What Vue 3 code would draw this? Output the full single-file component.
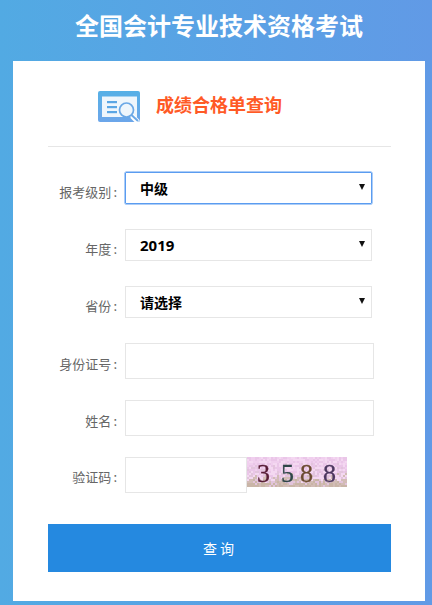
<script setup>
const rows = [
  { label: '报考级别', value: '中级', focused: true },
  { label: '年度', value: '2019', year: true },
  { label: '省份', value: '请选择' }
]
const inputs = ['身份证号', '姓名']
const digits = [
  { ch: '3', x: 10, color: '#571c36' },
  { ch: '5', x: 34, color: '#2f4649' },
  { ch: '8', x: 53, color: '#6b4a30' },
  { ch: '8', x: 76, color: '#4d3860' }
]

// Deterministic speckle for the captcha background
const palette = ['#f0cfee', '#eac6e8', '#f4d8f1', '#e2c4dc', '#d2bcb6', '#c9b5a7', '#ebd0e2']
let seed = 7
const next = () => {
  seed = (seed * 9301 + 49297) % 233280
  return seed / 233280
}
const noise = []
for (let y = 0; y < 30; y += 2) {
  for (let x = 0; x < 100; x += 2) {
    const bias = y / 30
    const r = next()
    const idx = Math.min(5, Math.floor(r * 3 + bias * bias * 4.5))
    noise.push({ x, y, fill: palette[idx] })
  }
}
</script>

<template>
  <div class="page">
    <h1 class="title">全国会计专业技术资格考试</h1>
    <main class="card">
      <div class="heading">
        <svg class="icon" viewBox="0 0 42 31" width="42" height="31">
          <defs>
            <linearGradient id="frame" x1="0" y1="0" x2="0" y2="1">
              <stop offset="0" stop-color="#56b0e6" />
              <stop offset="1" stop-color="#6ca6ea" />
            </linearGradient>
          </defs>
          <rect x="0" y="0" width="42" height="31" rx="2" fill="url(#frame)" />
          <rect x="4" y="5.5" width="35" height="20.5" fill="#eef6fc" />
          <rect x="9" y="10" width="10" height="2.2" fill="#5aa6e4" />
          <rect x="9" y="15" width="10" height="2.2" fill="#5aa6e4" />
          <rect x="9" y="20" width="10" height="2.2" fill="#5aa6e4" />
          <path d="M34 25 L40 31" stroke="#fff" stroke-width="5" />
          <circle cx="28.5" cy="19" r="7" fill="#eef6fc" stroke="#6aa8e6" stroke-width="1.7" />
          <path d="M33.5 24 L40 30" stroke="#6aa8e6" stroke-width="2" />
        </svg>
        <h2 class="subtitle">成绩合格单查询</h2>
      </div>
      <form class="form" @submit.prevent>
        <div v-for="r in rows" :key="r.label" class="row select-row">
          <label class="label">{{ r.label }}</label>
          <div class="select" :class="{ focused: r.focused }">
            <span class="value" :class="{ year: r.year }">{{ r.value }}</span>
            <i class="arrow"></i>
          </div>
        </div>
        <div v-for="l in inputs" :key="l" class="row input-row">
          <label class="label">{{ l }}</label>
          <input class="input" type="text" />
        </div>
        <div class="row input-row captcha-row">
          <label class="label">验证码</label>
          <input class="input short" type="text" />
          <svg class="captcha" viewBox="0 0 100 30" width="100" height="30">
            <g class="speckle">
              <rect
                v-for="(n, i) in noise"
                :key="i"
                :x="n.x"
                :y="n.y"
                width="2"
                height="2"
                :fill="n.fill"
              />
            </g>
            <text
              v-for="(d, i) in digits"
              :key="'d' + i"
              :x="d.x"
              y="24.5"
              class="digit"
              :fill="d.color"
              :stroke="d.color"
            >{{ d.ch }}</text>
          </svg>
        </div>
        <button class="submit" type="submit">查 询</button>
      </form>
    </main>
  </div>
</template>

<style scoped>
.page {
  width: 432px;
  height: 605px;
  box-sizing: border-box;
  padding: 0 7px 4px 13px;
  background: linear-gradient(90deg, #52aae3, #619ae6);
  display: flex;
  flex-direction: column;
  font-family: "Noto Sans", "Noto Sans CJK SC", sans-serif;
  overflow: hidden;
}
.title {
  margin: 0;
  height: 61px;
  padding-bottom: 12px;
  box-sizing: border-box;
  display: flex;
  align-items: center;
  justify-content: center;
  font-size: 24px;
  font-weight: 700;
  color: #fff;
  font-family: "Noto Sans CJK SC", sans-serif;
}
.card {
  flex: 1;
  background: #fff;
  padding: 30px 34px 0 35px;
}
.heading {
  display: flex;
  align-items: flex-start;
  gap: 16px;
  padding: 0 0 24px 50px;
  border-bottom: 1px solid #e6e6e6;
}
.icon {
  display: block;
  flex: none;
}
.subtitle {
  margin: 0;
  font-size: 18px;
  font-weight: 700;
  line-height: 26px;
  color: #ff5a26;
  font-family: "Noto Sans CJK SC", sans-serif;
}
.form {
  padding-top: 25px;
}
.row {
  display: flex;
  align-items: center;
  gap: 8px;
}
.select-row {
  margin-bottom: 25px;
}
.input-row {
  margin-bottom: 21px;
}
.label {
  width: 69px;
  flex: none;
  text-align: right;
  font-size: 13px;
  line-height: 20px;
  color: #666;
  font-family: "Noto Sans CJK SC", sans-serif;
  white-space: nowrap;
}
.label::after {
  content: ":";
  margin-left: 2px;
}
.select-row .label {
  padding-top: 8px;
}
.input-row .label {
  padding-top: 5px;
}
.select {
  width: 247px;
  height: 32px;
  box-sizing: border-box;
  border: 1px solid #e6e6e6;
  padding-left: 14px;
  display: flex;
  align-items: center;
  justify-content: space-between;
}
.select.focused {
  border-color: #5a9cf0;
  box-shadow: 0 0 0 0.5px #5a9cf0;
  border-radius: 1px;
}
.value {
  font-size: 14px;
  font-weight: 700;
  color: #000;
  font-family: "Noto Sans CJK SC", sans-serif;
}
.value.year {
  font-size: 15px;
  font-family: "Noto Sans", sans-serif;
}
.arrow {
  width: 0;
  height: 0;
  margin-right: 6px;
  margin-top: -3px;
  border-left: 3.5px solid transparent;
  border-right: 3.5px solid transparent;
  border-top: 6px solid #111;
}
.input {
  width: 249px;
  height: 36px;
  box-sizing: border-box;
  border: 1px solid #e6e6e6;
  background: #fff;
  padding: 0;
  outline: none;
}
.captcha-row {
  align-items: flex-start;
  gap: 0;
  margin-bottom: 31px;
}
.captcha-row .label {
  margin-right: 8px;
  padding-top: 10px;
}
.input.short {
  width: 122px;
}
.captcha {
  display: block;
  flex: none;
  overflow: hidden;
}
.speckle {
  filter: blur(0.7px);
}
.digit {
  font-family: "Liberation Serif", serif;
  font-size: 26px;
  stroke-width: 0.3px;
  filter: blur(0.3px);
}
.submit {
  display: block;
  width: 343px;
  height: 48px;
  border: none;
  padding: 0 2px 0 0;
  background: #2589e0;
  color: #fff;
  font-size: 14px;
  font-family: "Noto Sans CJK SC", sans-serif;
}
</style>

<style>
body { margin: 0; }
</style>
